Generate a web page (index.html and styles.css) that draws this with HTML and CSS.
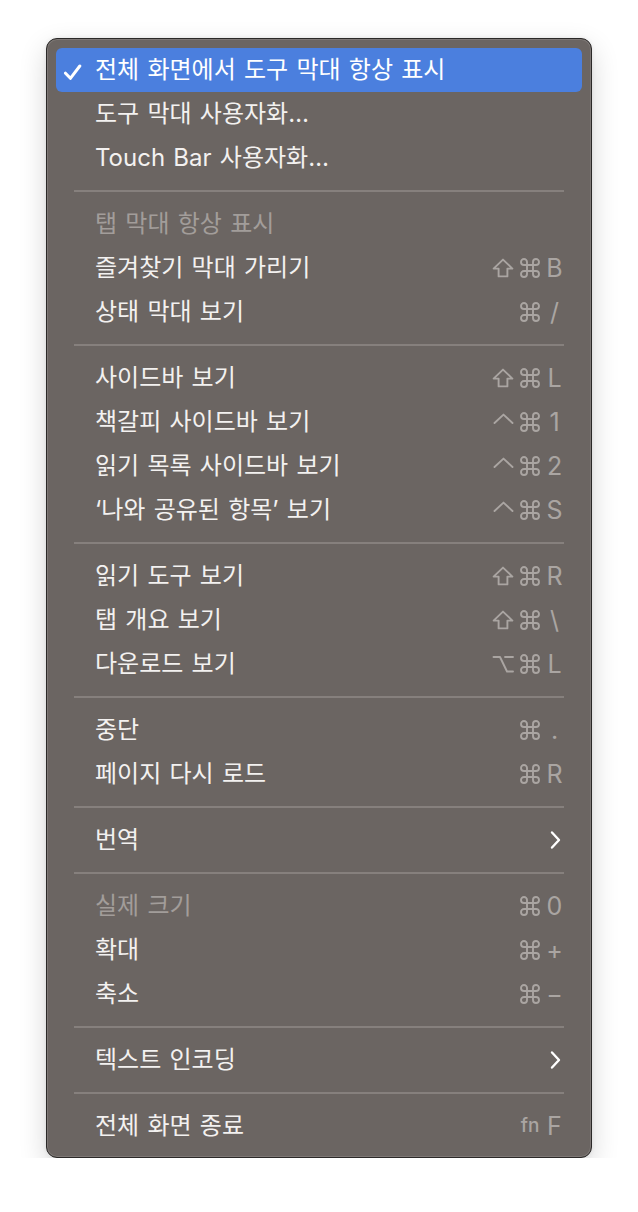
FILE: index.html
```html
<!DOCTYPE html>
<html lang="ko">
<head>
<meta charset="utf-8">
<title>보기 메뉴</title>
<link rel="stylesheet" href="styles.css">
</head>
<body>
<div class="menu">
  <div class="item active">
    <span class="mark"><svg width="20" height="20" viewBox="0 0 20 20"><path d="M2.5 13.2 L7.4 18.3 L16.8 6" fill="none" stroke="#fff" stroke-width="3" stroke-linecap="round" stroke-linejoin="round"/></svg></span>
    <span class="label">전체 화면에서 도구 막대 항상 표시</span>
  </div>
  <div class="item"><span class="mark"></span><span class="label">도구 막대 사용자화…</span></div>
  <div class="item"><span class="mark"></span><span class="label">Touch Bar 사용자화…</span></div>
  <div class="sep"></div>

  <div class="item disabled"><span class="mark"></span><span class="label">탭 막대 항상 표시</span></div>
  <div class="item"><span class="mark"></span><span class="label">즐겨찾기 막대 가리기</span>
    <span class="keys"><span class="mod"><svg width="22" height="20" viewBox="0 0 22 20"><path d="M11 1.6 L20.4 10.6 H15.4 V18.4 H6.6 V10.6 H1.6 Z"/></svg></span><span class="cmd"><svg width="20" height="20" viewBox="0 0 20 20"><path d="M7 7 V4 A3 3 0 1 0 4 7 H16 A3 3 0 1 0 13 4 V16 A3 3 0 1 0 16 13 H4 A3 3 0 1 0 7 16 Z"/></svg></span><span class="key">B</span></span>
  </div>
  <div class="item"><span class="mark"></span><span class="label">상태 막대 보기</span>
    <span class="keys"><span class="cmd"><svg width="20" height="20" viewBox="0 0 20 20"><path d="M7 7 V4 A3 3 0 1 0 4 7 H16 A3 3 0 1 0 13 4 V16 A3 3 0 1 0 16 13 H4 A3 3 0 1 0 7 16 Z"/></svg></span><span class="key">/</span></span>
  </div>
  <div class="sep"></div>

  <div class="item"><span class="mark"></span><span class="label">사이드바 보기</span>
    <span class="keys"><span class="mod"><svg width="22" height="20" viewBox="0 0 22 20"><path d="M11 1.6 L20.4 10.6 H15.4 V18.4 H6.6 V10.6 H1.6 Z"/></svg></span><span class="cmd"><svg width="20" height="20" viewBox="0 0 20 20"><path d="M7 7 V4 A3 3 0 1 0 4 7 H16 A3 3 0 1 0 13 4 V16 A3 3 0 1 0 16 13 H4 A3 3 0 1 0 7 16 Z"/></svg></span><span class="key">L</span></span>
  </div>
  <div class="item"><span class="mark"></span><span class="label">책갈피 사이드바 보기</span>
    <span class="keys"><span class="mod"><svg width="22" height="20" viewBox="0 0 22 20"><path d="M2.5 11 L11.5 2.6 L20.5 11"/></svg></span><span class="cmd"><svg width="20" height="20" viewBox="0 0 20 20"><path d="M7 7 V4 A3 3 0 1 0 4 7 H16 A3 3 0 1 0 13 4 V16 A3 3 0 1 0 16 13 H4 A3 3 0 1 0 7 16 Z"/></svg></span><span class="key">1</span></span>
  </div>
  <div class="item"><span class="mark"></span><span class="label">읽기 목록 사이드바 보기</span>
    <span class="keys"><span class="mod"><svg width="22" height="20" viewBox="0 0 22 20"><path d="M2.5 11 L11.5 2.6 L20.5 11"/></svg></span><span class="cmd"><svg width="20" height="20" viewBox="0 0 20 20"><path d="M7 7 V4 A3 3 0 1 0 4 7 H16 A3 3 0 1 0 13 4 V16 A3 3 0 1 0 16 13 H4 A3 3 0 1 0 7 16 Z"/></svg></span><span class="key">2</span></span>
  </div>
  <div class="item"><span class="mark"></span><span class="label">‘나와 공유된 항목’ 보기</span>
    <span class="keys"><span class="mod"><svg width="22" height="20" viewBox="0 0 22 20"><path d="M2.5 11 L11.5 2.6 L20.5 11"/></svg></span><span class="cmd"><svg width="20" height="20" viewBox="0 0 20 20"><path d="M7 7 V4 A3 3 0 1 0 4 7 H16 A3 3 0 1 0 13 4 V16 A3 3 0 1 0 16 13 H4 A3 3 0 1 0 7 16 Z"/></svg></span><span class="key">S</span></span>
  </div>
  <div class="sep"></div>

  <div class="item"><span class="mark"></span><span class="label">읽기 도구 보기</span>
    <span class="keys"><span class="mod"><svg width="22" height="20" viewBox="0 0 22 20"><path d="M11 1.6 L20.4 10.6 H15.4 V18.4 H6.6 V10.6 H1.6 Z"/></svg></span><span class="cmd"><svg width="20" height="20" viewBox="0 0 20 20"><path d="M7 7 V4 A3 3 0 1 0 4 7 H16 A3 3 0 1 0 13 4 V16 A3 3 0 1 0 16 13 H4 A3 3 0 1 0 7 16 Z"/></svg></span><span class="key">R</span></span>
  </div>
  <div class="item"><span class="mark"></span><span class="label">탭 개요 보기</span>
    <span class="keys"><span class="mod"><svg width="22" height="20" viewBox="0 0 22 20"><path d="M11 1.6 L20.4 10.6 H15.4 V18.4 H6.6 V10.6 H1.6 Z"/></svg></span><span class="cmd"><svg width="20" height="20" viewBox="0 0 20 20"><path d="M7 7 V4 A3 3 0 1 0 4 7 H16 A3 3 0 1 0 13 4 V16 A3 3 0 1 0 16 13 H4 A3 3 0 1 0 7 16 Z"/></svg></span><span class="key">\</span></span>
  </div>
  <div class="item"><span class="mark"></span><span class="label">다운로드 보기</span>
    <span class="keys"><span class="mod"><svg width="22" height="20" viewBox="0 0 22 20"><path d="M1.5 3 H8 L15 17.5 H21 M13 3 H21"/></svg></span><span class="cmd"><svg width="20" height="20" viewBox="0 0 20 20"><path d="M7 7 V4 A3 3 0 1 0 4 7 H16 A3 3 0 1 0 13 4 V16 A3 3 0 1 0 16 13 H4 A3 3 0 1 0 7 16 Z"/></svg></span><span class="key">L</span></span>
  </div>
  <div class="sep"></div>

  <div class="item"><span class="mark"></span><span class="label">중단</span>
    <span class="keys"><span class="cmd"><svg width="20" height="20" viewBox="0 0 20 20"><path d="M7 7 V4 A3 3 0 1 0 4 7 H16 A3 3 0 1 0 13 4 V16 A3 3 0 1 0 16 13 H4 A3 3 0 1 0 7 16 Z"/></svg></span><span class="key">.</span></span>
  </div>
  <div class="item"><span class="mark"></span><span class="label">페이지 다시 로드</span>
    <span class="keys"><span class="cmd"><svg width="20" height="20" viewBox="0 0 20 20"><path d="M7 7 V4 A3 3 0 1 0 4 7 H16 A3 3 0 1 0 13 4 V16 A3 3 0 1 0 16 13 H4 A3 3 0 1 0 7 16 Z"/></svg></span><span class="key">R</span></span>
  </div>
  <div class="sep"></div>

  <div class="item"><span class="mark"></span><span class="label">번역</span>
    <span class="keys"><span class="sub"><svg width="12" height="20" viewBox="0 0 12 20"><path d="M3 2.5 L10 10 L3 17.5"/></svg></span></span>
  </div>
  <div class="sep"></div>

  <div class="item disabled"><span class="mark"></span><span class="label">실제 크기</span>
    <span class="keys"><span class="cmd"><svg width="20" height="20" viewBox="0 0 20 20"><path d="M7 7 V4 A3 3 0 1 0 4 7 H16 A3 3 0 1 0 13 4 V16 A3 3 0 1 0 16 13 H4 A3 3 0 1 0 7 16 Z"/></svg></span><span class="key">0</span></span>
  </div>
  <div class="item"><span class="mark"></span><span class="label">확대</span>
    <span class="keys"><span class="cmd"><svg width="20" height="20" viewBox="0 0 20 20"><path d="M7 7 V4 A3 3 0 1 0 4 7 H16 A3 3 0 1 0 13 4 V16 A3 3 0 1 0 16 13 H4 A3 3 0 1 0 7 16 Z"/></svg></span><span class="key">+</span></span>
  </div>
  <div class="item"><span class="mark"></span><span class="label">축소</span>
    <span class="keys"><span class="cmd"><svg width="20" height="20" viewBox="0 0 20 20"><path d="M7 7 V4 A3 3 0 1 0 4 7 H16 A3 3 0 1 0 13 4 V16 A3 3 0 1 0 16 13 H4 A3 3 0 1 0 7 16 Z"/></svg></span><span class="key">−</span></span>
  </div>
  <div class="sep"></div>

  <div class="item"><span class="mark"></span><span class="label">텍스트 인코딩</span>
    <span class="keys"><span class="sub"><svg width="12" height="20" viewBox="0 0 12 20"><path d="M3 2.5 L10 10 L3 17.5"/></svg></span></span>
  </div>
  <div class="sep"></div>

  <div class="item"><span class="mark"></span><span class="label">전체 화면 종료</span>
    <span class="keys"><span class="cmd fn">fn</span><span class="key">F</span></span>
  </div>
</div>
</body>
</html>
```

FILE: styles.css
```css
html, body {
  margin: 0;
  background: #ffffff;
}

body {
  font-family: "Inter", "Noto Sans CJK KR", sans-serif;
  -webkit-font-smoothing: antialiased;
}

.menu {
  box-sizing: border-box;
  width: 546px;
  margin: 38px 0 0 46px;
  padding: 9px;
  background: #6b6562;
  border: 1px solid #2b2928;
  border-radius: 11px;
  box-shadow:
    inset 0 0 0 1px rgba(255, 255, 255, 0.13),
    0 10px 28px rgba(0, 0, 0, 0.16),
    0 0 4px rgba(0, 0, 0, 0.08);
}

.item {
  display: flex;
  align-items: center;
  height: 44px;
  padding: 0 18px 0 7px;
  border-radius: 6px;
  color: #f3f1f0;
}

.item.active {
  background: #4b7fde;
  color: #ffffff;
}

.item.disabled .label {
  color: #a29d9a;
}

.mark {
  flex: 0 0 32px;
  display: flex;
  align-items: center;
  height: 20px;
}

.label {
  font-size: 24px;
  word-spacing: 1.5px;
  white-space: nowrap;
  line-height: 44px;
}

.keys {
  margin-left: auto;
  display: flex;
  align-items: center;
  color: #aaa5a2;
}

.keys svg {
  display: block;
  fill: none;
  stroke: #aaa5a2;
  stroke-width: 1.9;
  stroke-linecap: round;
  stroke-linejoin: round;
}

.mod {
  width: 22px;
  margin-right: 6px;
}

.cmd {
  width: 20px;
  margin-right: 5px;
}

.key {
  width: 19px;
  text-align: center;
  font-size: 25px;
  line-height: 44px;
}

.sub {
  width: 19px;
  display: flex;
  justify-content: center;
}

.sub svg {
  stroke: #ffffff;
  stroke-width: 2.4;
}

.fn {
  font-size: 19px;
  font-weight: 500;
  line-height: 44px;
  text-align: center;
}

.sep {
  height: 2px;
  margin: 10px 18px;
  background: #86807d;
}
```
